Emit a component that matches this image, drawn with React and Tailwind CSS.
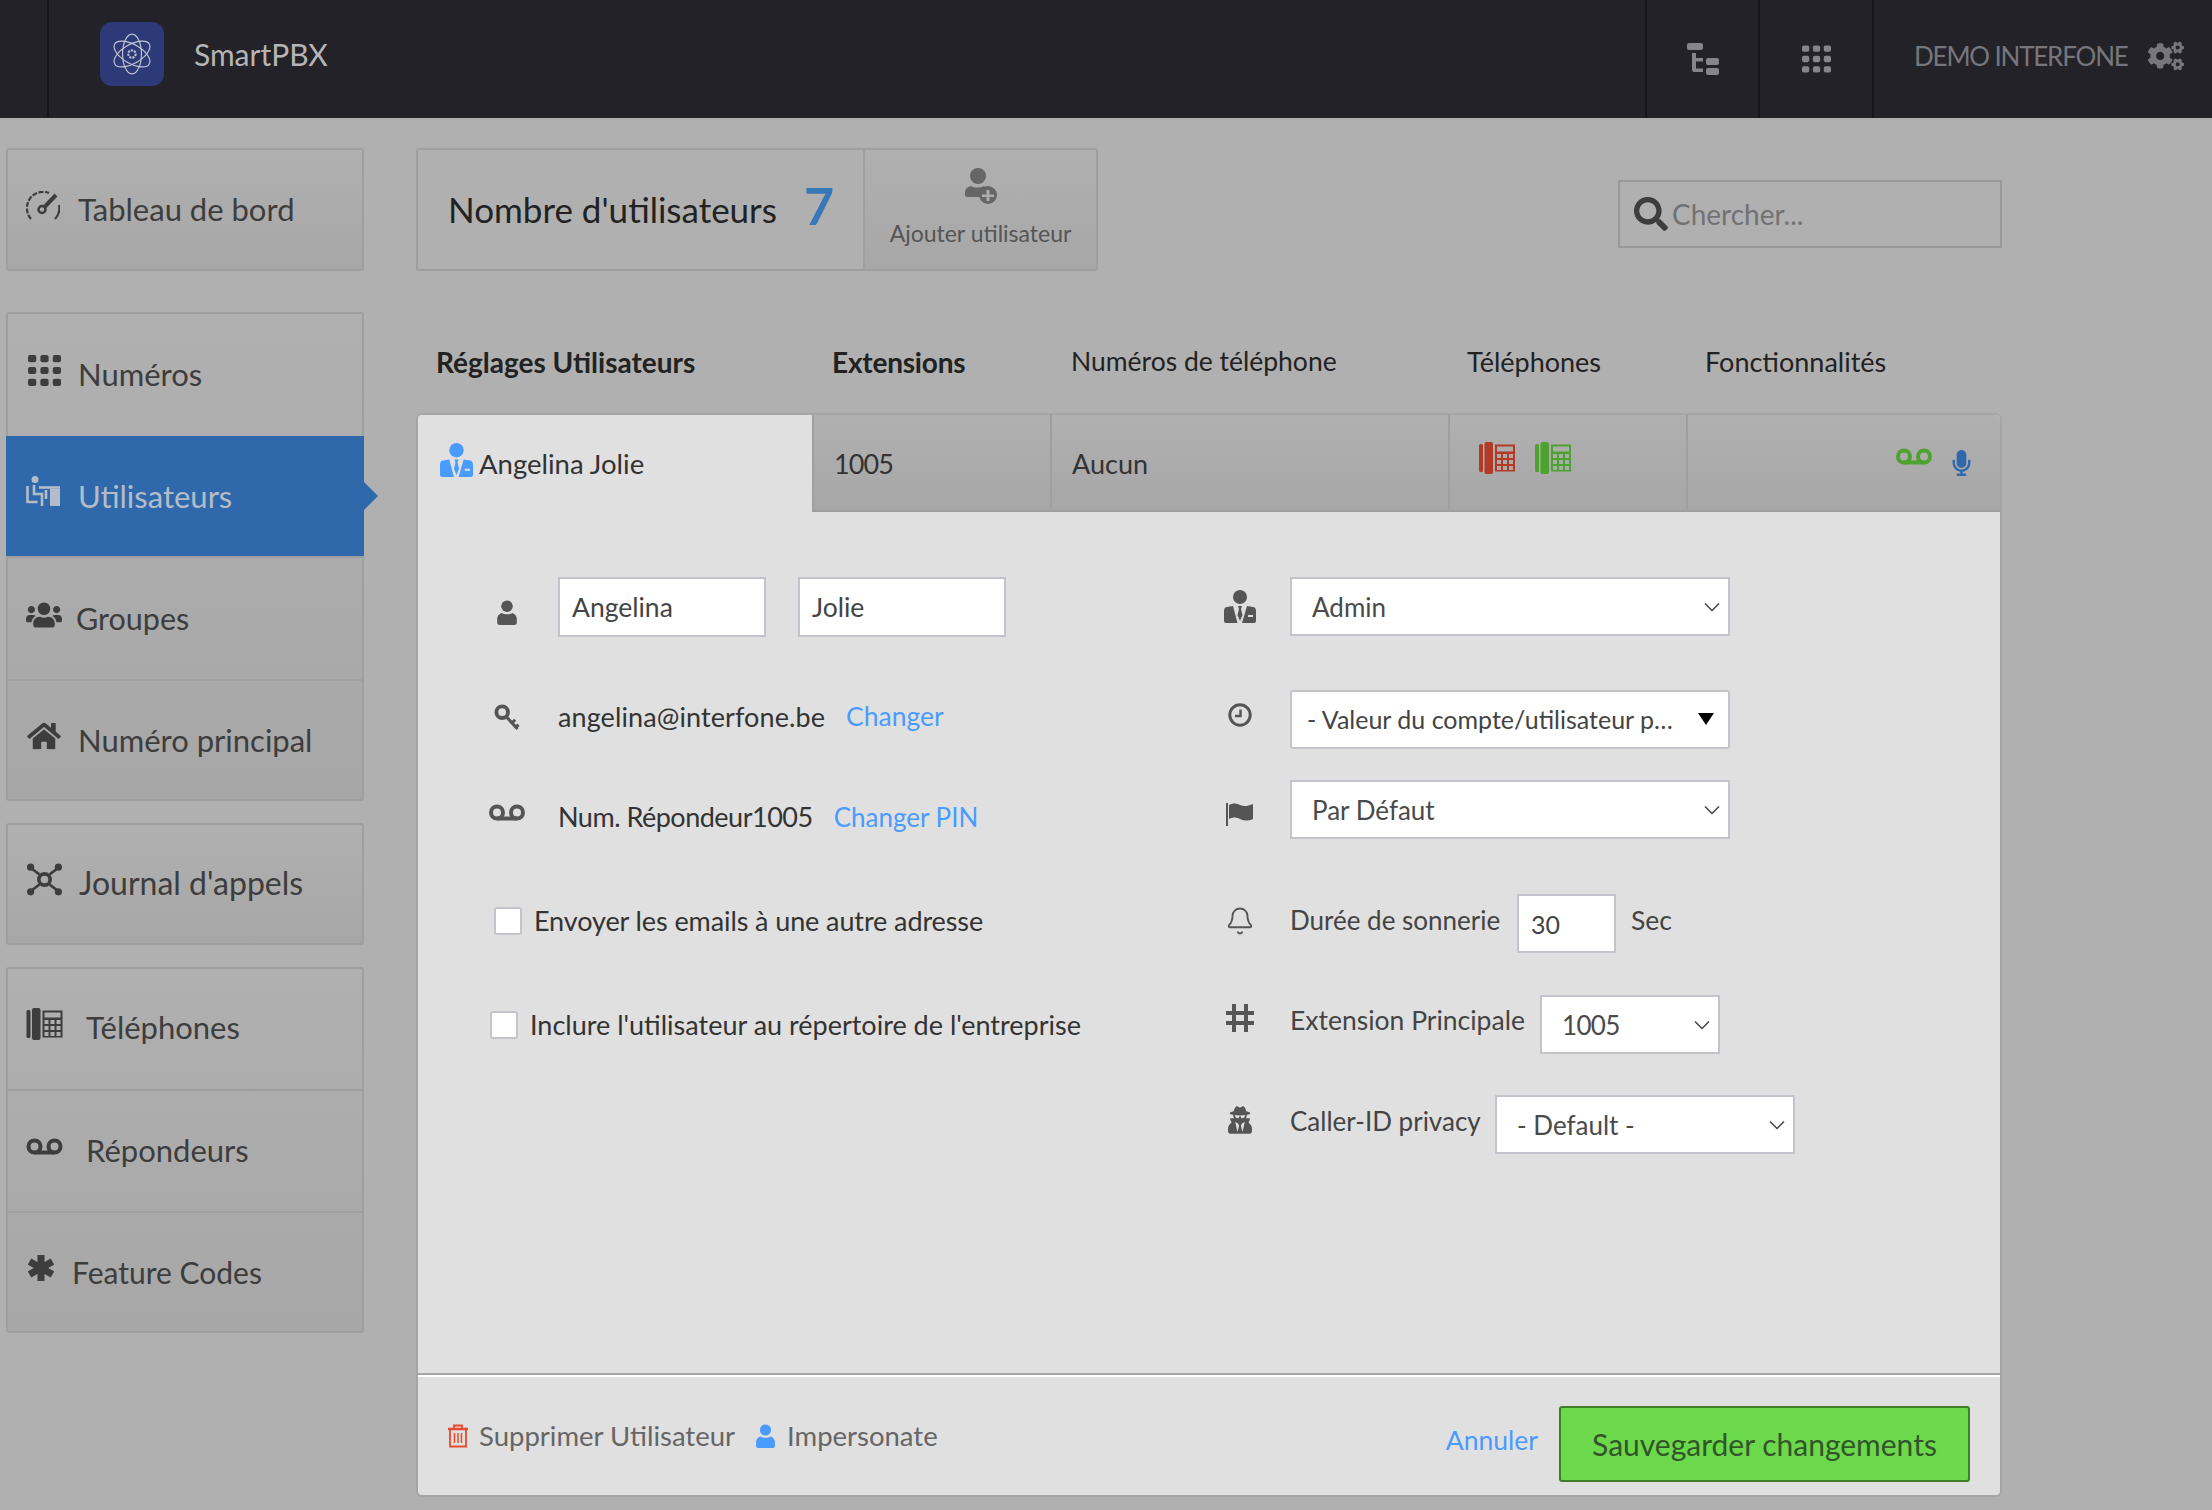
import React from 'react';
import { FaUsers, FaHome, FaSearch, FaCogs, FaUserSecret, FaMicrophone } from 'react-icons/fa';
import { Bell } from 'lucide-react';

const Voicemail = ({ className }) => (
  <svg viewBox="0 0 36 17" className={className} fill="none" stroke="currentColor" strokeWidth="4">
    <circle cx="8" cy="8.5" r="6" />
    <circle cx="28" cy="8.5" r="6" />
    <path d="M8 14.5h20" />
  </svg>
);

const DeskPhone = ({ className }) => (
  <svg viewBox="0 0 36 32" className={className} fill="currentColor">
    <rect x="0" y="2" width="4" height="28" rx="1.5" />
    <rect x="5.5" y="0" width="8.5" height="32" rx="2" />
    <path
      fillRule="evenodd"
      d="M16 2.5h20v27H16zM18 4.500v5h16v-5zM18 12v4h4v-4zM24 12v4h4v-4zM30 12v4h4v-4zM18 18v4h4v-4zM24 18v4h4v-4zM30 18v4h4v-4zM18 24v4h4v-4zM24 24v4h4v-4zM30 24v4h4v-4z"
    />
  </svg>
);

const DotGrid = ({ className }) => (
  <svg viewBox="0 0 32 30" className={className} fill="currentColor">
    {[0, 11.5, 23].map((y) =>
      [0, 12, 24].map((x) => <rect key={`${x}-${y}`} x={x} y={y} width="8" height="7" rx="2" />)
    )}
  </svg>
);

const Gauge = ({ className }) => (
  <svg viewBox="0 0 34 30" className={className} fill="none" stroke="currentColor" strokeWidth="2.200">
    <path d="M5 28A16 16 0 0 1 1 16A16 16 0 0 1 23 2" strokeDasharray="5 1.500" />
    <path d="M33 14A16 16 0 0 1 29 28" />
    <circle cx="16" cy="18.500" r="3.500" strokeWidth="2.500" />
    <path d="M19 15.500L30 4" strokeWidth="4" />
  </svg>
);

const SeatedUsers = ({ className }) => (
  <svg viewBox="0 0 34 32" className={className} fill="none" stroke="currentColor" strokeWidth="2.600">
    <circle cx="9" cy="3.500" r="3.500" fill="currentColor" stroke="none" />
    <path d="M1.500 10v16h10" />
    <path d="M8 9v9h8v12" />
    <path d="M13 11.500h21" />
    <path d="M24 13h10v17H24z" fill="currentColor" stroke="none" />
    <path d="M20 14v9" />
  </svg>
);

const CallNet = ({ className }) => (
  <svg viewBox="0 0 36 32" className={className} fill="currentColor" stroke="currentColor">
    <circle cx="18" cy="16" r="5.500" fill="none" strokeWidth="3.500" />
    <path d="M5 5l8 6M31 5l-8 6M5 27l8-6M31 27l-8-6" strokeWidth="2.500" fill="none" />
    <circle cx="4.500" cy="4" r="3.500" stroke="none" />
    <circle cx="31.500" cy="4" r="3.500" stroke="none" />
    <circle cx="4.500" cy="28" r="3.500" stroke="none" />
    <circle cx="31.500" cy="28" r="3.500" stroke="none" />
  </svg>
);

const OrgTree = ({ className }) => (
  <svg viewBox="0 0 32 32" className={className} fill="currentColor">
    <rect x="0" y="0" width="16" height="7" rx="2" />
    <path d="M5 10h4v5h7v3.500H9v7h7V29H7a2 2 0 0 1-2-2z" />
    <rect x="19" y="15" width="13" height="7" rx="2" />
    <rect x="19" y="25" width="13" height="7" rx="2" />
  </svg>
);

const Agent = ({ className }) => (
  <svg viewBox="0 0 32 34" className={className} fill="currentColor">
    <circle cx="16" cy="7" r="7" />
    <path d="M9 16L13.500 33H2a2 2 0 0 1-2-2V21c0-2 1-4 3-4z" />
    <path d="M23 16l-5 17h12a2 2 0 0 0 2-2V21c0-2-1-4-3-4zM24 25v2h5v-2z" fillRule="evenodd" />
    <path d="M14 16h4l-1 3 1.500 6-2.500 6-2.500-6 1.500-6z" />
  </svg>
);

const Person = ({ className }) => (
  <svg viewBox="0 0 22 28" className={className} fill="currentColor">
    <circle cx="11" cy="7" r="6.500" />
    <path d="M5 14.500c3 2 9 2 12 0 3 1 5 3.500 5 6.500v4a3 3 0 0 1-3 3H3a3 3 0 0 1-3-3v-4c0-3 2-5.500 5-6.500z" />
  </svg>
);

const PersonAdd = ({ className }) => (
  <svg viewBox="0 0 32 36" className={className} fill="currentColor">
    <circle cx="13" cy="8" r="8" />
    <path d="M6 18c3 2 9 2 13 0l2 2a10 10 0 0 0-6 9H2a2 2 0 0 1-2-2v-3c0-3 2-5 6-6z" />
    <path fillRule="evenodd" d="M23 18a9 9 0 1 1 0 18a9 9 0 0 1 0-18zM21.500 22v4.500H17v2.500h4.500v4h3v-4H29v-2.500h-4.500V22z" />
  </svg>
);

const KeyIcon = ({ className }) => (
  <svg viewBox="0 0 26 28" className={className} fill="none" stroke="currentColor">
    <circle cx="8" cy="8.500" r="6" strokeWidth="4" />
    <path d="M12.500 13.500L24 26M18 19.500l3.500-3M22 24l3-2.500" strokeWidth="3.200" />
  </svg>
);

const ClockIcon = ({ className }) => (
  <svg viewBox="0 0 24 24" className={className} fill="none" stroke="currentColor" strokeWidth="3">
    <circle cx="12" cy="12" r="10.200" />
    <path d="M12.500 6.500v6.500H7" strokeWidth="2.500" />
  </svg>
);

const FlagIcon = ({ className }) => (
  <svg viewBox="0 0 28 24" className={className} fill="currentColor">
    <rect x="0" y="1" width="2" height="23" />
    <path d="M3 3c4-2 7-2 11 0s8 1 13-1v15c-5 2-9 2-13 0s-7-2-11 0z" />
  </svg>
);

const HashIcon = ({ className }) => (
  <svg viewBox="0 0 28 28" className={className} fill="none" stroke="currentColor" strokeWidth="4">
    <path d="M8 0v28M20 0v28M0 9h28M0 19h28" />
  </svg>
);

const StarIcon = ({ className }) => (
  <svg viewBox="0 0 26 26" className={className} fill="none" stroke="currentColor" strokeWidth="7">
    <path d="M13 0v26M1.500 6.500l23 13M24.500 6.500l-23 13" />
  </svg>
);

const TrashIcon = ({ className }) => (
  <svg viewBox="0 0 22 24" className={className} fill="none" stroke="currentColor" strokeWidth="1.800">
    <path d="M1 5h20" strokeWidth="2.500" />
    <path d="M7 4V1.500h8V4" />
    <path d="M3 6v16.500h16V6" />
    <path d="M7.500 9v10M11 9v10M14.500 9v10" strokeWidth="1.500" />
  </svg>
);

const Atom = ({ className }) => (
  <svg viewBox="0 0 40 40" className={className} fill="none" stroke="currentColor" strokeWidth="1.100">
    <ellipse cx="20" cy="20" rx="9" ry="19" />
    <ellipse cx="20" cy="20" rx="9" ry="19" transform="rotate(60 20 20)" />
    <ellipse cx="20" cy="20" rx="9" ry="19" transform="rotate(-60 20 20)" />
    <circle cx="20" cy="20" r="3.500" strokeWidth="2" strokeDasharray="2 1" />
  </svg>
);

const Chevron = ({ className }) => (
  <svg viewBox="0 0 16 10" className={className} fill="none" stroke="#444" strokeWidth="1.500">
    <path d="M1 1.500l7 7 7-7" />
  </svg>
);

const Select = ({ value, className, textClass }) => (
  <div className={`relative shrink-0 h-[59px] border-2 border-[#c3c3cb] bg-white ${className}`}>
    <select
      defaultValue={value}
      className={`w-full h-full appearance-none bg-white outline-none pt-[1px] text-[26px] text-[#4a4a4a] ${textClass}`}
    >
      <option>{value}</option>
    </select>
    <Chevron className="absolute right-[8px] top-[23px] w-[16px] h-[10px] pointer-events-none" />
  </div>
);

const navGroups = [
  [{ label: 'Tableau de bord', icon: <Gauge className="w-[34px] h-[30px]" />, gap: 'ml-[15px]', h: 'h-[119px]', size: 'text-[31px]' }],
  [
    { label: 'Numéros', icon: <DotGrid className="w-[33px] h-[31px] ml-[2px]" />, gap: 'ml-[15px]', h: 'h-[122px] pb-[2px]', size: 'text-[31px]' },
    { label: 'Utilisateurs', icon: <SeatedUsers className="w-[34px] h-[32px]" />, gap: 'ml-[15px]', h: 'h-[120px]', active: true, size: 'text-[31px]' },
    { label: 'Groupes', icon: <FaUsers className="w-[36px] h-[32px]" />, gap: 'ml-[13px]', h: 'h-[123px]', size: 'text-[30.5px]' },
    { label: 'Numéro principal', icon: <FaHome className="w-[36px] h-[30px]" />, gap: 'ml-[15px]', h: 'h-[120px]', size: 'text-[31px]' },
  ],
  [{ label: "Journal d'appels", icon: <CallNet className="w-[37px] h-[33px]" />, gap: 'ml-[16px]', h: 'h-[118px] pb-[2px]', size: 'text-[32px]' }],
  [
    { label: 'Téléphones', icon: <DeskPhone className="w-[37px] h-[32px]" />, gap: 'ml-[23px]', h: 'h-[120px] pb-[3px]', size: 'text-[31px]' },
    { label: 'Répondeurs', icon: <Voicemail className="w-[37px] h-[17px]" />, gap: 'ml-[23px]', h: 'h-[122px] pb-[2px]', size: 'text-[31px]' },
    { label: 'Feature Codes', icon: <StarIcon className="w-[26px] h-[26px] ml-[2px]" />, gap: 'ml-[9px]', h: 'h-[120px]', size: 'text-[30px]' },
  ],
];

const Sidebar = () => (
  <aside className="w-[416px] shrink-0 pl-[6px]">
    {navGroups.map((group, i) => (
      <div
        key={i}
        className={`relative w-[358px] rounded-[3px] border-2 border-[#9f9f9f] bg-gradient-to-b from-[#b0b0b0] to-[#a7a7a7] ${
          i === 0 ? 'mb-[41px]' : 'mb-[22px]'
        }`}
      >
        {group.map((item, j) => (
          <div
            key={item.label}
            className={`relative flex items-center pl-[18px] text-[#3d3d3d] ${item.h} ${
              item.active ? '-mx-[2px] pl-[20px] bg-[#3068ac] text-[#b4bcc8]' : ''
            } ${j > 0 && !item.active ? 'border-t-2 border-[#9f9f9f]' : ''}`}
          >
            <span className="w-[37px] mb-[8px] flex items-center">{item.icon}</span>
            <span className={`${item.size} ${item.gap}`}>{item.label}</span>
            {item.active && (
              <span className="absolute right-[-14px] top-1/2 -translate-y-1/2 border-y-[14px] border-l-[14px] border-y-transparent border-l-[#3068ac]" />
            )}
          </div>
        ))}
      </div>
    ))}
  </aside>
);

const Header = () => (
  <header className="h-[118px] bg-[#222228] flex items-stretch shrink-0">
    <div className="w-[49px] border-r-2 border-[#17171b]" />
    <div className="flex items-center pl-[51px] pb-[10px]">
      <div className="w-[64px] h-[64px] rounded-[12px] bg-[#2d3a78] flex items-center justify-center text-[#c3c6d4]">
        <Atom className="w-[42px] h-[44px]" />
      </div>
      <span className="ml-[30px] text-[30px] text-[#b5b5b8]">SmartPBX</span>
    </div>
    <div className="ml-auto flex items-stretch">
      <div className="w-[115px] border-x-2 border-[#17171b] flex items-center justify-center text-[#85858b]">
        <OrgTree className="w-[32px] h-[32px]" />
      </div>
      <div className="w-[114px] border-r-2 border-[#17171b] flex items-center justify-center text-[#85858b]">
        <DotGrid className="w-[29px] h-[28px]" />
      </div>
      <div className="w-[338px] flex items-center pl-[40px] pb-[6px] text-[#76767c]">
        <span className="w-[234px] shrink-0 text-[26px] tracking-[-1.2px] whitespace-nowrap">DEMO INTERFONE</span>
        <FaCogs className="w-[36px] h-[34px]" />
      </div>
    </div>
  </header>
);

const UserForm = () => (
  <div className="flex-1 flex pt-[65px]">
    <div className="w-[772px] shrink-0 text-[27px] text-[#333]">
      <div className="flex items-center h-[60px]">
        <div className="w-[140px] pl-[38px] shrink-0 flex justify-center text-[#555] pt-[10px]">
          <Person className="w-[22px] h-[25px]" />
        </div>
        <input
          defaultValue="Angelina"
          className="w-[208px] h-[60px] border-2 border-[#c3c3cb] bg-white pl-[12px] text-[26.5px] text-[#444] outline-none"
        />
        <input
          defaultValue="Jolie"
          className="ml-[32px] w-[208px] h-[60px] border-2 border-[#c3c3cb] bg-white pl-[12px] text-[26.5px] text-[#444] outline-none"
        />
      </div>
      <div className="flex items-center h-[40px] mt-[60px]">
        <div className="w-[140px] pl-[38px] shrink-0 flex justify-center text-[#555]">
          <KeyIcon className="w-[26px] h-[27px]" />
        </div>
        <span className="tracking-[0.1px]">angelina@interfone.be</span>
        <a className="ml-[21px] text-[26.5px] text-[#4a9bff]">Changer</a>
      </div>
      <div className="flex items-center h-[40px] mt-[60px]">
        <div className="w-[140px] pl-[38px] shrink-0 flex justify-center text-[#555] pb-[10px]">
          <Voicemail className="w-[36px] h-[17px]" />
        </div>
        <span className="tracking-[-0.5px]">Num. Répondeur1005</span>
        <a className="ml-[21px] text-[26px] text-[#4a9bff]">Changer PIN</a>
      </div>
      <label className="flex items-center h-[40px] mt-[64px] pl-[76px]">
        <input type="checkbox" className="appearance-none w-[28px] h-[28px] rounded-[3px] border-2 border-[#c3c3cb] bg-white" />
        <span className="ml-[12px] tracking-[-0.1px]">Envoyer les emails à une autre adresse</span>
      </label>
      <label className="flex items-center h-[40px] mt-[64px] pl-[72px]">
        <input type="checkbox" className="appearance-none w-[28px] h-[28px] rounded-[3px] border-2 border-[#c3c3cb] bg-white" />
        <span className="ml-[12px]">Inclure l'utilisateur au répertoire de l'entreprise</span>
      </label>
    </div>
    <div className="flex-1 text-[26.5px] text-[#444]">
      <div className="flex items-center">
        <div className="w-[100px] flex justify-center text-[#555]">
          <Agent className="w-[32px] h-[34px]" />
        </div>
        <Select value="Admin" className="w-[440px]" textClass="pl-[20px]" />
      </div>
      <div className="flex items-center mt-[54px]">
        <div className="w-[100px] flex justify-center text-[#555] pb-[10px]">
          <ClockIcon className="w-[24px] h-[24px]" />
        </div>
        <div className="relative w-[440px] h-[59px] border-2 border-[#c3c3cb] rounded-[3px] bg-white flex items-center pl-[15px] pt-[1px] text-[25px] text-[#444]">
          <span className="whitespace-nowrap">- Valeur du compte/utilisateur p…</span>
          <span className="absolute right-[14px] top-[21px] border-x-[8px] border-t-[12px] border-x-transparent border-t-black" />
        </div>
      </div>
      <div className="flex items-center mt-[31px]">
        <div className="w-[100px] flex justify-center text-[#555] pt-[8px]">
          <FlagIcon className="w-[28px] h-[24px]" />
        </div>
        <Select value="Par Défaut" className="w-[440px]" textClass="pl-[20px]" />
      </div>
      <div className="flex items-center mt-[55px] h-[59px]">
        <div className="w-[100px] flex justify-center text-[#555] pb-[6px]">
          <Bell className="w-[30px] h-[30px]" strokeWidth={1.5} />
        </div>
        <span className="w-[227px] shrink-0 pb-[6px] text-[26px] whitespace-nowrap">Durée de sonnerie</span>
        <input
          defaultValue="30"
          className="w-[99px] h-[59px] border-2 border-[#c3c3cb] bg-white pl-[12px] text-[25px] text-[#444] outline-none"
        />
        <span className="ml-[15px] pb-[6px]">Sec</span>
      </div>
      <div className="flex items-center mt-[42px]">
        <div className="w-[100px] flex justify-center text-[#555] pb-[14px]">
          <HashIcon className="w-[28px] h-[28px]" />
        </div>
        <span className="w-[250px] shrink-0 pb-[8px] whitespace-nowrap">Extension Principale</span>
        <Select value="1005" className="w-[180px]" textClass="pl-[20px] tracking-[-0.7px]" />
      </div>
      <div className="flex items-center mt-[41px]">
        <div className="w-[100px] flex justify-center text-[#555] pb-[10px]">
          <FaUserSecret className="w-[24px] h-[28px]" />
        </div>
        <span className="w-[205px] shrink-0 pb-[6px] text-[26px] whitespace-nowrap">Caller-ID privacy</span>
        <Select value="- Default -" className="w-[300px]" textClass="pl-[20px]" />
      </div>
    </div>
  </div>
);

const UserPanel = () => (
  <div className="h-[1084px] flex flex-col rounded-[6px] border-2 border-[#a5a5a5] overflow-hidden bg-[#e0e0e0]">
    <div className="flex h-[97px] text-[27px] text-[#333] shrink-0">
      <div className="w-[394px] flex items-center pl-[22px] bg-[#e0e0e0]">
        <Agent className="w-[33px] h-[35px] text-[#4a9bff] mb-[6px]" />
        <span className="ml-[6px] text-[27.5px]">Angelina Jolie</span>
      </div>
      <div className="w-[240px] flex items-center pl-[20px] pt-[3px] tracking-[-0.9px] border-x-2 border-b-2 border-[#9f9f9f] bg-gradient-to-b from-[#b0b0b0] to-[#a7a7a7]">1005</div>
      <div className="w-[398px] flex items-center pl-[20px] pt-[3px] border-r-2 border-b-2 border-[#9f9f9f] bg-gradient-to-b from-[#b0b0b0] to-[#a7a7a7]">Aucun</div>
      <div className="w-[238px] flex items-center pl-[29px] border-r-2 border-b-2 border-[#9f9f9f] bg-gradient-to-b from-[#b0b0b0] to-[#a7a7a7]">
        <DeskPhone className="w-[36px] h-[32px] text-[#b33a26] mb-[10px]" />
        <DeskPhone className="ml-[20px] w-[36px] h-[32px] text-[#4ea22f] mb-[10px]" />
      </div>
      <div className="flex-1 flex items-center justify-end pr-[29px] border-b-2 border-[#9f9f9f] bg-gradient-to-b from-[#b0b0b0] to-[#a7a7a7]">
        <Voicemail className="w-[36px] h-[17px] text-[#4ea22f] mb-[12px]" />
        <FaMicrophone className="ml-[20px] w-[19px] h-[26px] text-[#3068ac]" />
      </div>
    </div>
    <UserForm />
    <div className="h-[122px] shrink-0 border-t-2 border-[#a5a5a5]">
      <div className="h-full border-t-2 border-white flex items-center pl-[29px] pr-[30px] text-[#666] text-[27.5px]">
        <TrashIcon className="w-[22px] h-[24px] text-[#e8492f]" />
        <span className="ml-[10px]">Supprimer Utilisateur</span>
        <Person className="ml-[20px] w-[21px] h-[24px] text-[#4a9bff]" />
        <span className="ml-[11px]">Impersonate</span>
        <a className="ml-auto text-[26.5px] text-[#4a9bff] mt-[10px]">Annuler</a>
        <button className="ml-[21px] mt-[16px] w-[411px] h-[76px] rounded-[3px] border-2 border-[#3f7f2a] bg-[#6bd94b] text-[30px] text-[#33552a]">
          Sauvegarder changements
        </button>
      </div>
    </div>
  </div>
);

export default function App() {
  return (
    <div className="w-[2212px] h-[1510px] overflow-hidden flex flex-col bg-[#b0b0b0] font-['Lato',sans-serif]">
      <Header />
      <div className="flex pt-[30px]">
        <Sidebar />
        <main className="w-[1586px] shrink-0">
          <div className="flex items-start h-[123px]">
            <div className="flex w-[682px] h-[123px] rounded-[3px] border-2 border-[#9f9f9f]">
              <div className="w-[447px] flex items-center pl-[30px] text-[#222] text-[35px] border-r-2 border-[#9f9f9f]">
                <span className="w-[356px] shrink-0">Nombre d'utilisateurs</span>
                <span className="text-[52px] font-bold text-[#3877b8] -mt-[10px]">7</span>
              </div>
              <div className="flex-1 flex flex-col items-center pt-[18px] bg-gradient-to-b from-[#b0b0b0] to-[#a7a7a7] text-[#555]">
                <PersonAdd className="w-[32px] h-[36px] text-[#666]" />
                <span className="mt-[12px] text-[23px] whitespace-nowrap">Ajouter utilisateur</span>
              </div>
            </div>
            <div className="ml-auto mt-[32px] w-[384px] h-[68px] border-2 border-[#999] flex items-center pl-[14px] text-[#3d3d3d]">
              <FaSearch className="w-[34px] h-[34px] shrink-0" />
              <span className="ml-[4px] text-[28px] text-[#727272]">Chercher...</span>
            </div>
          </div>
          <div className="mt-[62px] h-[58px] mb-[22px] flex items-center pl-[20px] text-[26.5px] text-[#222]">
            <span className="w-[396px] shrink-0 text-[28px] font-bold">Réglages Utilisateurs</span>
            <span className="w-[239px] shrink-0 text-[28px] font-bold tracking-[-0.2px]">Extensions</span>
            <span className="w-[396px] shrink-0">Numéros de téléphone</span>
            <span className="w-[238px] shrink-0 text-[27px]">Téléphones</span>
            <span className="text-[27px]">Fonctionnalités</span>
          </div>
          <UserPanel />
        </main>
      </div>
    </div>
  );
}
